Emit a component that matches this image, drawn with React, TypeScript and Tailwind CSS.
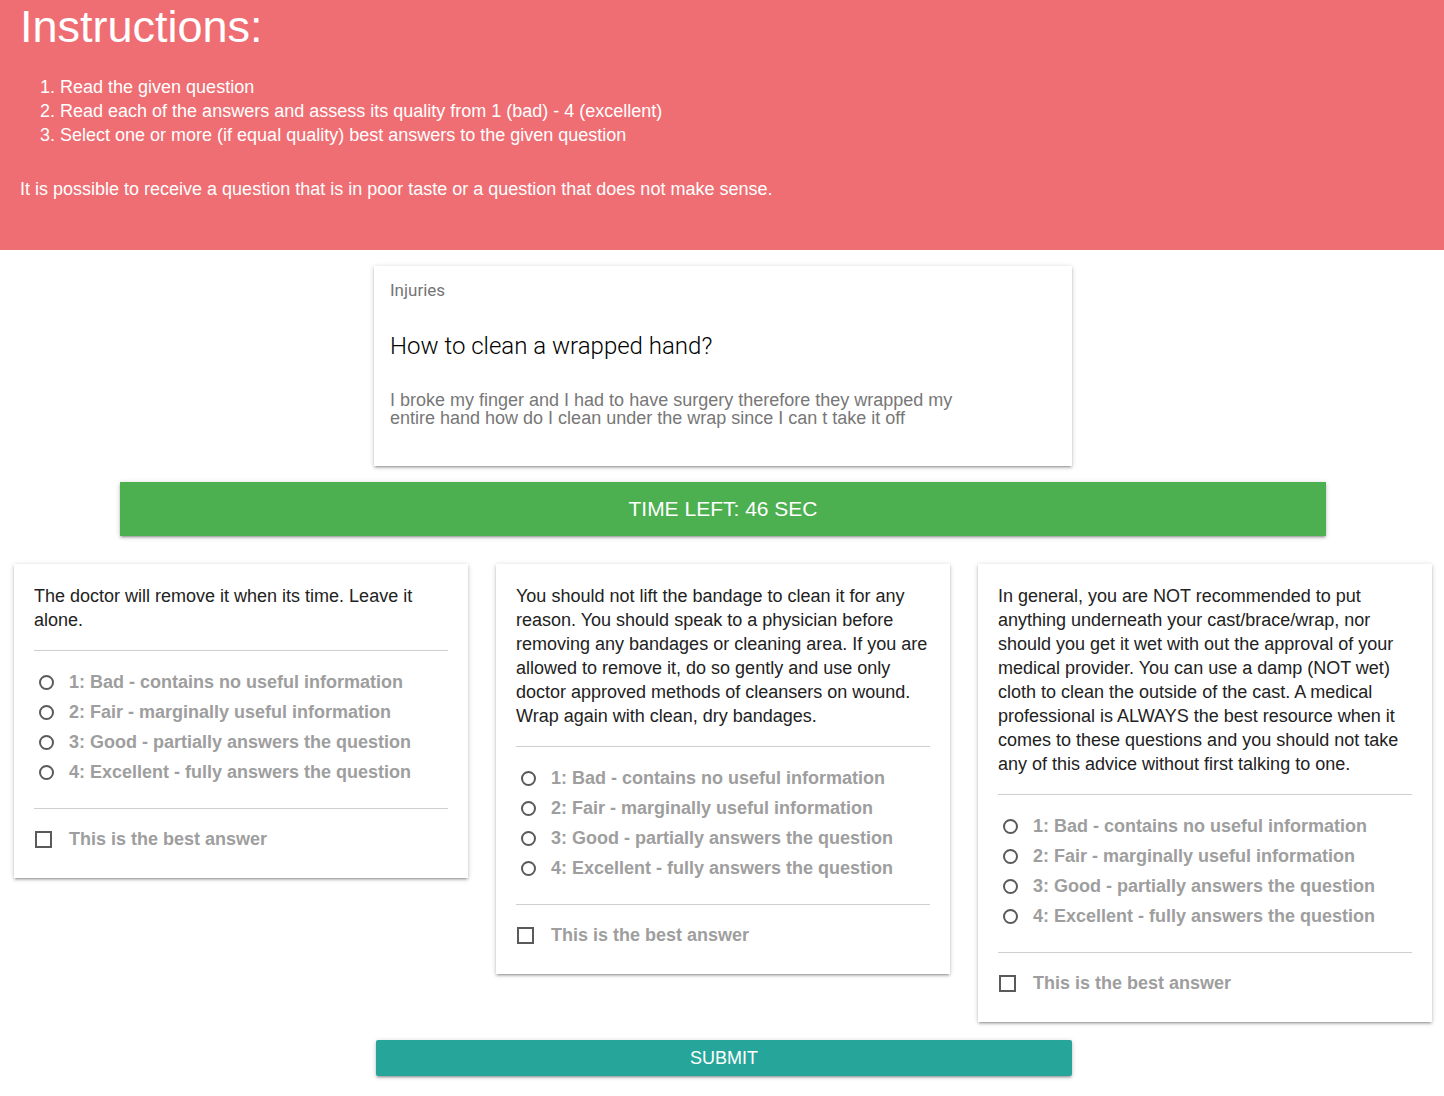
import React from "react"

const answers = [
  "The doctor will remove it when its time. Leave it alone.",
  "You should not lift the bandage to clean it for any reason. You should speak to a physician before removing any bandages or cleaning area. If you are allowed to remove it, do so gently and use only doctor approved methods of cleansers on wound. Wrap again with clean, dry bandages.",
  "In general, you are NOT recommended to put anything underneath your cast/brace/wrap, nor should you get it wet with out the approval of your medical provider. You can use a damp (NOT wet) cloth to clean the outside of the cast. A medical professional is ALWAYS the best resource when it comes to these questions and you should not take any of this advice without first talking to one.",
]

const ratings = [
  "1: Bad - contains no useful information",
  "2: Fair - marginally useful information",
  "3: Good - partially answers the question",
  "4: Excellent - fully answers the question",
]

const shadow =
  "shadow-[0_2px_2px_0_rgba(0,0,0,0.14),0_3px_1px_-2px_rgba(0,0,0,0.12),0_1px_5px_0_rgba(0,0,0,0.2)]"

function AnswerCard({ text }: { text: string }) {
  return (
    <div className={`bg-white px-[20px] pt-[20px] pb-[24px] ${shadow}`}>
      <p className="text-[18px] leading-[24px] text-[#222]">{text}</p>
      <div className="mt-[18px] h-px bg-[#cfcfcf]" />
      <div className="mt-[16px] flex flex-col">
        {ratings.map((r) => (
          <div key={r} className="flex h-[30px] items-center">
            <span className="ml-[5px] h-[15px] w-[15px] rounded-full border-2 border-[#5a5a5a]" />
            <span className="ml-[15px] text-[18px] font-bold text-[#9e9e9e]">{r}</span>
          </div>
        ))}
      </div>
      <div className="mt-[21px] h-px bg-[#cfcfcf]" />
      <div className="mt-[15px] flex h-[30px] items-center">
        <span className="ml-[1px] h-[17px] w-[17px] border-2 border-[#5a5a5a]" />
        <span className="ml-[17px] text-[18px] font-bold text-[#9e9e9e]">This is the best answer</span>
      </div>
    </div>
  )
}

export default function App() {
  return (
    <div className="min-h-[1096px] bg-white font-['Liberation_Sans',Arial,sans-serif]">
      <div className="h-[250px] bg-[#ef6e73] px-[20px] pt-[3px] text-white">
        <h1 className="text-[45px] leading-[48px]">Instructions:</h1>
        <div className="mt-[24px] pl-[20px] text-[18px] leading-[24px]">
          <div>1. Read the given question</div>
          <div>2. Read each of the answers and assess its quality from 1 (bad) - 4 (excellent)</div>
          <div>3. Select one or more (if equal quality) best answers to the given question</div>
        </div>
        <p className="mt-[30px] text-[18px] leading-[24px]">
          It is possible to receive a question that is in poor taste or a question that does not make sense.
        </p>
      </div>

      <div className="pl-[2px]">
        <div className={`mx-auto mt-[16px] w-[698px] bg-white px-[16px] pt-[14px] pb-[39px] ${shadow}`}>
          <div className="font-['Roboto',sans-serif] text-[17px] leading-[20px] text-[#757575]">Injuries</div>
          <div className="mt-[30px] font-['Roboto',sans-serif] text-[24px] leading-[32px] font-light text-black">
            How to clean a wrapped hand?
          </div>
          <p className="mt-[29px] w-[580px] text-[18px] leading-[18px] text-[#777]">
            I broke my finger and I had to have surgery therefore they wrapped my entire hand how do I clean under the wrap since I can t take it off
          </p>
        </div>

        <div className={`mx-auto mt-[16px] flex h-[54px] w-[1206px] items-center justify-center bg-[#4caf50] text-[21px] text-white ${shadow}`}>
          TIME LEFT: 46 SEC
        </div>
      </div>

      <div className="mt-[28px] grid grid-cols-3 items-start gap-[28px] pl-[14px] pr-[12px]">
        {answers.map((a) => (
          <AnswerCard key={a} text={a} />
        ))}
      </div>

      <div className="mt-[18px] flex justify-center pl-[4px]">
        <button className={`flex h-[36px] w-[696px] items-center justify-center rounded-[2px] bg-[#26a69a] text-[18px] text-white ${shadow}`}>
          SUBMIT
        </button>
      </div>
    </div>
  )
}
